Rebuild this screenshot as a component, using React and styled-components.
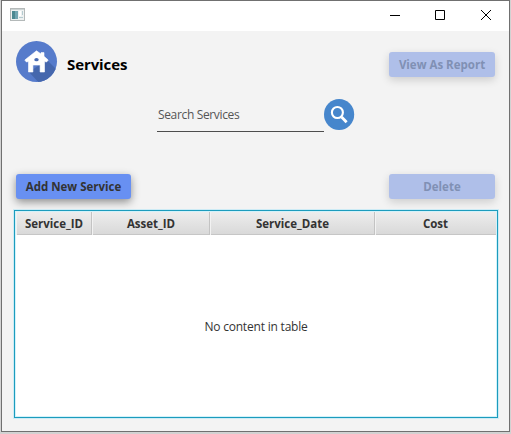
import React from "react";
import styled, { createGlobalStyle } from "styled-components";

const GlobalStyle = createGlobalStyle`
  * { box-sizing: border-box; }
  body {
    margin: 0;
    background: #d2d2d2;
    overflow: hidden;
    font-family: "Open Sans", "Noto Sans", sans-serif;
    font-size: 12px;
    color: #333;
  }
`;

const Window = styled.div`
  width: 509px;
  height: 432px;
  margin-left: 1px;
  border: 1px solid #707070;
  background: #f3f3f3;
  display: flex;
  flex-direction: column;
`;

const TitleBar = styled.header`
  height: 30px;
  flex: none;
  background: #fff;
  display: flex;
  align-items: center;
  padding-left: 8px;
`;

const WindowControls = styled.div`
  display: flex;
  margin-left: auto;
`;

const WindowControl = styled.button`
  width: ${(p) => p.$width || 46}px;
  height: 30px;
  border: 0;
  padding: 0 0 2px;
  background: none;
  display: flex;
  align-items: center;
  justify-content: center;
`;

const WindowIcon = styled.svg`
  margin-bottom: 3px;
`;

const Content = styled.main`
  flex: 1;
  display: flex;
  flex-direction: column;
  padding: 9px 11px 13px 12px;
`;

const Row = styled.div`
  display: flex;
  flex: none;
  justify-content: space-between;
  align-items: flex-start;
  height: ${(p) => p.$height}px;
  padding: ${(p) => p.$padding};
`;

const Heading = styled.div`
  display: flex;
  align-items: center;
  gap: 9px;
  padding-top: 1px;
`;

const Title = styled.h1`
  margin: 3px 0 0;
  font-size: 15px;
  line-height: 20px;
  font-weight: 700;
  color: #000;
  letter-spacing: -0.1px;
`;

const Button = styled.button`
  width: ${(p) => p.$width}px;
  height: 25px;
  padding: 0;
  border: 0;
  border-radius: 3px;
  background: #6890f2;
  color: #333;
  font: 700 11.5px/25px "Open Sans", "Noto Sans", sans-serif;
  white-space: nowrap;
  box-shadow: 0 3px 8px rgba(0, 0, 0, 0.42);
  &:disabled {
    background: #afbfe9;
    color: #8090b4;
    box-shadow: 0 3px 8px rgba(0, 0, 0, 0.16);
  }
`;

const SearchRow = styled.div`
  display: flex;
  flex: none;
  height: 75px;
  padding: 9px 0 0 143px;
`;

const SearchField = styled.div`
  width: 167px;
  height: 33px;
  padding-left: 1px;
  border-bottom: 1px solid #4d4d4d;
  line-height: 31px;
  color: #555;
  letter-spacing: -0.35px;
  white-space: nowrap;
`;

const Table = styled.section`
  flex: 1;
  min-height: 0;
  display: flex;
  flex-direction: column;
  background: #fff;
  border: 1px solid #1c9cbd;
  box-shadow: 0 0 0 1px #cdebf5, inset 0 0 0 1px #d3f2fa;
  padding: 0 1px;
`;

const TableHead = styled.div`
  display: grid;
  grid-template-columns: 76px 118px 165px 1fr;
  flex: none;
  height: 24px;
  border-top: 1px solid #d3f2fa;
  border-bottom: 1px solid #c6c6c6;
  background: linear-gradient(#ededed, #d9d9d9);
`;

const HeadCell = styled.div`
  text-align: center;
  padding-left: 1px;
  font-size: 11.5px;
  font-weight: 700;
  line-height: 23px;
  border-right: 1px solid #c3c3c3;
  box-shadow: inset 1px 0 #f2f2f2;
  &:last-child { border-right-color: transparent; }
`;

const Placeholder = styled.div`
  flex: 1;
  display: flex;
  align-items: center;
  justify-content: center;
  letter-spacing: -0.2px;
`;

const columns = ["Service_ID", "Asset_ID", "Service_Date", "Cost"];

function AppIcon() {
  return (
    <WindowIcon width="15" height="13" viewBox="0 0 15 13">
      <rect x=".5" y=".5" width="14" height="12" fill="#eef1f1" stroke="#b4b9b9" />
      <path d="M1 1h13v1H1z" fill="#ccd3d3" />
      <path d="M2 3h6v8H2z" fill="#72a5b1" />
      <path d="M2 3h3v8H2z" fill="#4c8891" />
      <path d="M9 3h2v5H9z" fill="#fff" />
      <path d="M12 3h1v4h-1zM9 9h4v1H9z" fill="#b5cbd0" />
    </WindowIcon>
  );
}

function HomeIcon() {
  return (
    <svg width="42" height="42" viewBox="0 0 42 42">
      <defs><clipPath id="badge"><circle cx="20.5" cy="20.5" r="20.5" /></clipPath></defs>
      <circle cx="20.5" cy="20.5" r="20.5" fill="#567bcb" />
      <path clipPath="url(#badge)" d="M31 19 43 31v13H25L13 31z" fill="#4567ad" />
      <path fill="#fff" stroke="#fff" strokeWidth=".6" strokeLinejoin="round" d="M20.5 9.8 25 13v-1.4h3v3.7l4.2 3.7-1.6 2-2.1-.5V31h-4.4v-7h-7.2v7h-4.4V20.5l-2.1.5-1.6-2z" />
      <ellipse cx="20.5" cy="18.7" rx="2.2" ry="1.6" fill="#486bb3" />
    </svg>
  );
}

function SearchIcon() {
  return (
    <svg width="31" height="32" viewBox="0 0 31 32">
      <ellipse cx="15.1" cy="15.5" rx="15.1" ry="15.5" fill="#4686cc" />
      <path d="m17.6 18 5 5.3" stroke="#fff" strokeWidth="2.8" />
      <circle cx="13.4" cy="13.5" r="5.5" fill="none" stroke="#fff" strokeWidth="2.1" />
    </svg>
  );
}

export default function App() {
  return (
    <>
      <GlobalStyle />
      <Window>
        <TitleBar>
          <AppIcon />
          <WindowControls>
            <WindowControl aria-label="Minimize"><svg width="10" height="10"><path d="M0 5.5h10" stroke="#000" /></svg></WindowControl>
            <WindowControl aria-label="Maximize" $width={44}><svg width="10" height="10"><path d="M.5.5h9v9h-9z" fill="none" stroke="#000" /></svg></WindowControl>
            <WindowControl aria-label="Close" $width={47}><svg width="10" height="10"><path d="m0 0 10 10M10 0 0 10" stroke="#000" /></svg></WindowControl>
          </WindowControls>
        </TitleBar>
        <Content>
          <Row $height={50} $padding="0 3px 0 2px">
            <Heading><HomeIcon /><Title>Services</Title></Heading>
            <Row $height={37} $padding="12px 0 0">
              <Button disabled $width={106}>View As Report</Button>
            </Row>
          </Row>
          <SearchRow>
            <SearchField>Search Services</SearchField>
            <SearchIcon />
          </SearchRow>
          <Row $height={45} $padding="9px 3px 0 2px">
            <Button $width={115}>Add New Service</Button>
            <Button disabled $width={106}>Delete</Button>
          </Row>
          <Table>
            <TableHead>
              {columns.map((name) => <HeadCell key={name}>{name}</HeadCell>)}
            </TableHead>
            <Placeholder>No content in table</Placeholder>
          </Table>
        </Content>
      </Window>
    </>
  );
}
